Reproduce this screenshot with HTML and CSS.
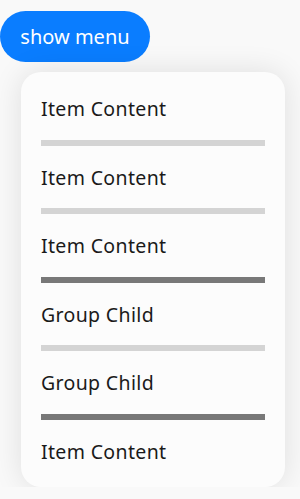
FILE: index.html
```html
<!DOCTYPE html>
<html>
<head>
<meta charset="utf-8">
<link rel="stylesheet" href="styles.css">
</head>
<body>
<div class="page">
  <button class="show-btn">show menu</button>
  <div class="menu">
    <div class="item">Item Content</div>
    <div class="divider light"></div>
    <div class="item">Item Content</div>
    <div class="divider light"></div>
    <div class="item">Item Content</div>
    <div class="divider dark"></div>
    <div class="item">Group Child</div>
    <div class="divider light"></div>
    <div class="item">Group Child</div>
    <div class="divider dark"></div>
    <div class="item">Item Content</div>
  </div>
</div>
</body>
</html>
```

FILE: styles.css
```css
html, body {
  margin: 0;
  padding: 0;
  background: #f9f9f9;
}
.page {
  display: flex;
  flex-direction: column;
  align-items: flex-start;
  padding-top: 11px;
  font-family: "Noto Sans", sans-serif;
}
.show-btn {
  width: 150px;
  height: 51px;
  border: none;
  border-radius: 26px;
  background: #0a7dff;
  color: #fff;
  font-family: "Noto Sans", sans-serif;
  font-size: 20px;
  padding: 0;
}
.menu {
  margin-top: 10px;
  margin-left: 21px;
  width: 264px;
  height: 415px;
  box-sizing: border-box;
  padding: 5px 20px;
  background: #fcfcfc;
  border-radius: 20px;
  box-shadow: 0 0 30px rgba(0,0,0,0.11);
  display: flex;
  flex-direction: column;
}
.item {
  height: 62.5px;
  display: flex;
  align-items: center;
  font-size: 19.5px;
  letter-spacing: 0.35px;
  color: #1a1a1a;
  padding-top: 1px;
  box-sizing: border-box;
}
.divider {
  height: 6px;
}
.divider.light { background: #d4d4d4; }
.divider.dark { background: #787878; }
```
